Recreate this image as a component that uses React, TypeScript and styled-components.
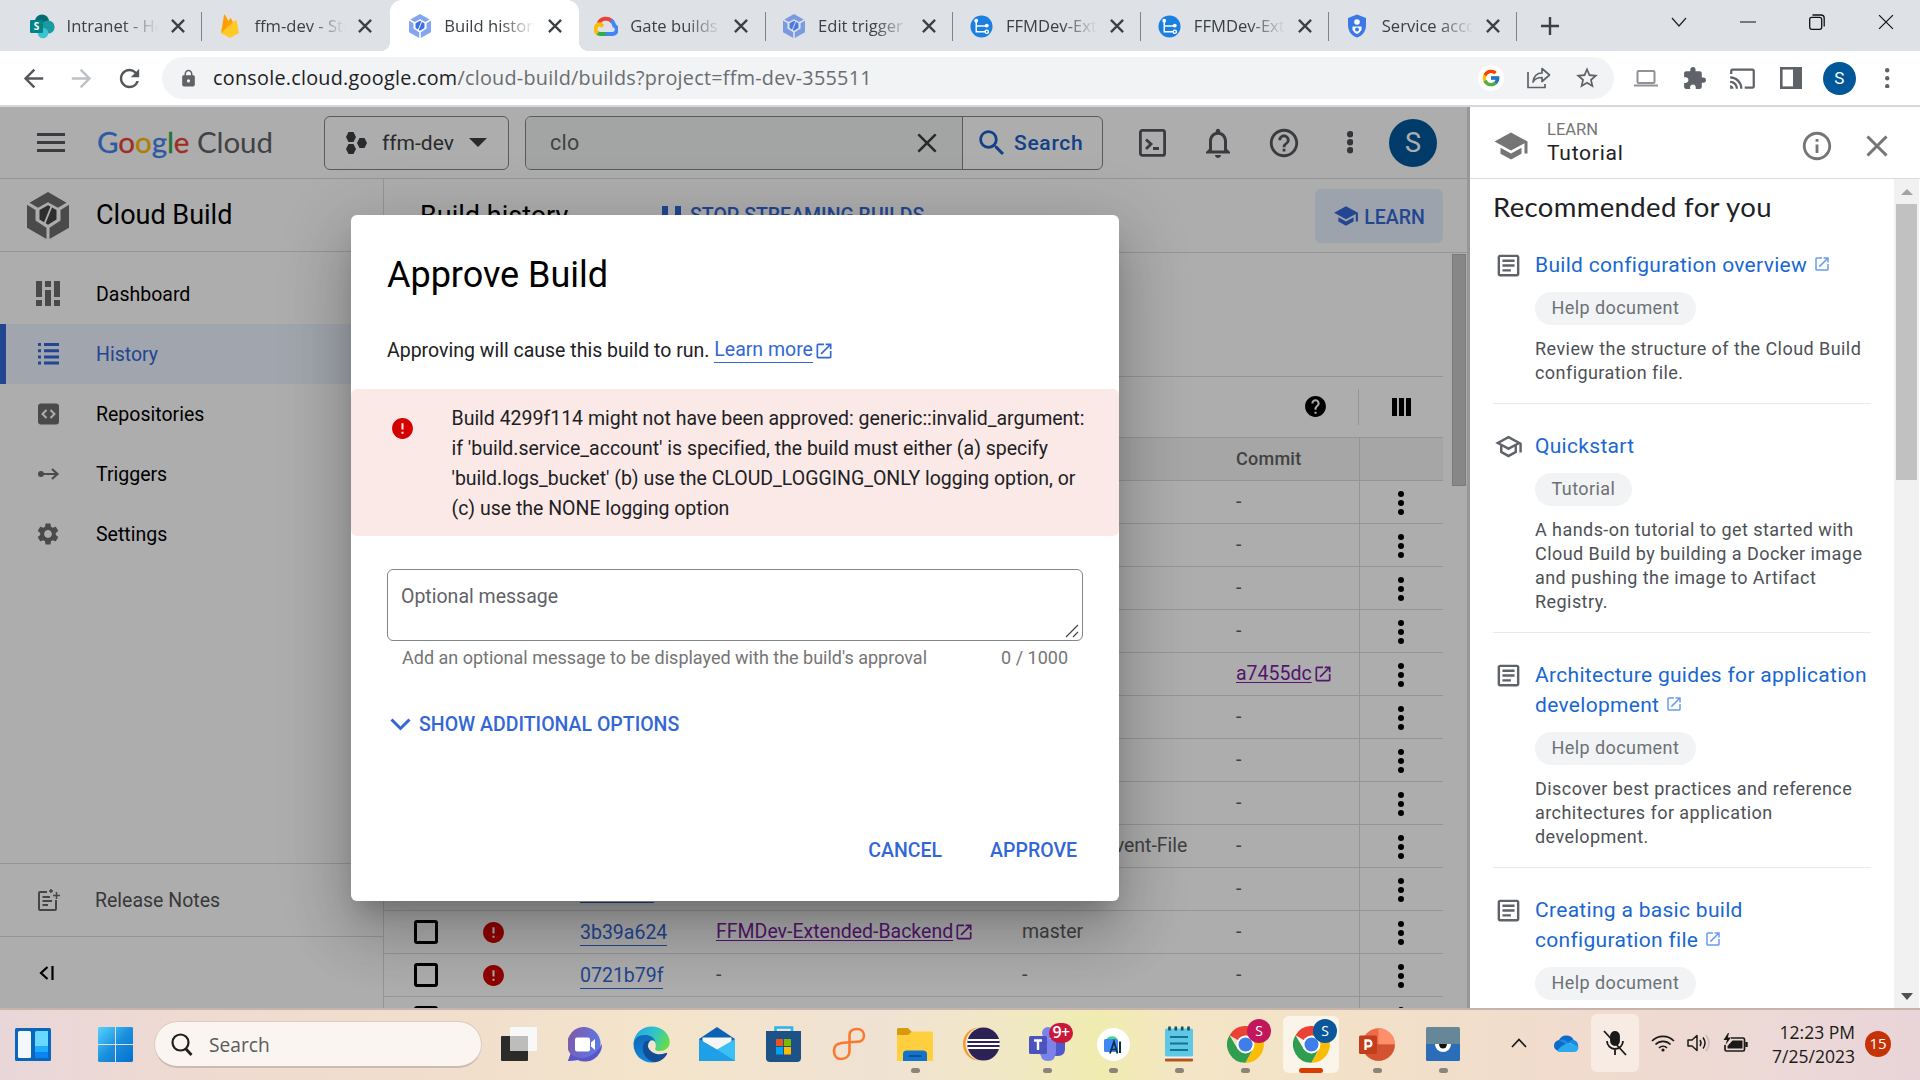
import React from "react";
import styled, { createGlobalStyle, css } from "styled-components";
import {
  MdSchool,
  MdOutlineSchool,
  MdOutlineArticle,
  MdOpenInNew,
  MdSettings,
  MdInfoOutline,
  MdHelp,
  MdHelpOutline,
  MdNotificationsNone,
  MdSearch,
  MdExtension,
  MdCast,
  MdLock,
  MdStarBorder,
  MdArrowBack,
  MdArrowForward,
  MdRefresh,
  MdError,
} from "react-icons/md";
import { FcGoogle } from "react-icons/fc";

const ui = `"Open Sans", "Noto Sans", sans-serif`;
const roboto = `Roboto, "Liberation Sans", sans-serif`;

const Global = createGlobalStyle`
  * { box-sizing: border-box; }
  html, body { margin: 0; padding: 0; background: #fff; }
  body { width: 1920px; height: 1080px; overflow: hidden; font-family: ${roboto}; }
  svg { display: block; flex: none; }
`;

const Screen = styled.div`
  width: 1920px;
  height: 1080px;
  display: flex;
  flex-direction: column;
  overflow: hidden;
`;

/* ---------- browser tabs ---------- */

const TabStrip = styled.div`
  height: 51px;
  flex: none;
  background: #dee1e6;
  display: flex;
  padding-left: 14px;
  font-family: ${ui};
`;

const Tab = styled.div<{ $active?: boolean; $line?: boolean }>`
  position: relative;
  width: 187.9px;
  height: 51px;
  flex: none;
  display: flex;
  align-items: center;
  padding: 1px 0 0 15px;
  ${(p) =>
    p.$line &&
    css`
      &::after {
        content: "";
        position: absolute;
        right: 0;
        top: 12px;
        width: 1px;
        height: 29px;
        background: #808489;
      }
    `}
  ${(p) =>
    p.$active &&
    css`
      background: #fff;
      border-radius: 12px 12px 0 0;
      width: 189.4px;
      margin-right: -1.5px;
      padding-left: 17px;
      &::before {
        content: "";
        position: absolute;
        left: -10px;
        right: -10px;
        bottom: 0;
        height: 10px;
        background: radial-gradient(circle at 0 0, transparent 10px, #fff 10.5px) left / 10px 10px no-repeat,
          radial-gradient(circle at 100% 0, transparent 10px, #fff 10.5px) right / 10px 10px no-repeat;
      }
    `}
`;

const Favicon = styled.div`
  width: 26px;
  height: 26px;
  display: flex;
  align-items: center;
  justify-content: center;
`;

const TabTitle = styled.span`
  margin-left: 11.5px;
  width: 93px;
  overflow: hidden;
  white-space: nowrap;
  font-size: 16.6px;
  line-height: 26px;
  color: #3c4043;
  mask-image: linear-gradient(90deg, #000 60%, transparent 98%);
`;

const TabClose = styled.span`
  margin-left: 11px;
  width: 14px;
  color: #3c4043;
`;

const NewTab = styled.div`
  width: 65px;
  display: flex;
  align-items: center;
  justify-content: center;
`;

const WindowControls = styled.div`
  margin-left: auto;
  width: 276px;
  height: 44px;
  display: grid;
  grid-template-columns: repeat(4, 69px);
  align-items: center;
  justify-items: center;
`;

/* ---------- address bar ---------- */

const Toolbar = styled.div`
  height: 56px;
  flex: none;
  background: #fff;
  border-bottom: 2px solid #d5d7da;
  display: flex;
  align-items: center;
  padding-left: 9px;
  color: #5f6368;
`;

const NavButton = styled.div<{ $dim?: boolean }>`
  width: 48px;
  display: flex;
  justify-content: center;
  color: ${(p) => (p.$dim ? "#bdc1c6" : "#54585d")};
`;

const Omnibox = styled.div`
  margin-left: 9px;
  width: 1452px;
  height: 42px;
  border-radius: 21px;
  background: #f1f3f4;
  display: flex;
  align-items: center;
  padding-left: 17px;
`;

const Url = styled.span`
  margin-left: 15px;
  font-family: ${ui};
  font-size: 19.8px;
  line-height: 28px;
  letter-spacing: 0.26px;
  color: #6a6d71;
  white-space: nowrap;
  b {
    font-weight: 400;
    color: #202124;
  }
`;

const OmniIcons = styled.div`
  margin-left: auto;
  margin-right: 3px;
  display: grid;
  grid-template-columns: repeat(3, 48px);
  justify-items: center;
  align-items: center;
`;

const GBadge = styled.div`
  width: 26px;
  height: 26px;
  border-radius: 50%;
  background: #fff;
  display: flex;
  align-items: center;
  justify-content: center;
`;

const ToolbarIcons = styled.div`
  margin-left: 8px;
  display: grid;
  grid-template-columns: repeat(6, 48.3px);
  justify-items: center;
  align-items: center;
`;

const Avatar = styled.div<{ $size: number; $font: number }>`
  width: ${(p) => p.$size}px;
  height: ${(p) => p.$size}px;
  border-radius: 50%;
  background: #00589b;
  color: #fff;
  display: flex;
  align-items: center;
  justify-content: center;
  font-size: ${(p) => p.$font}px;
`;

/* ---------- console ---------- */

const Body = styled.div`
  height: 901px;
  flex: none;
  display: flex;
`;

const Console = styled.div`
  position: relative;
  width: 1467px;
  flex: none;
  display: flex;
  flex-direction: column;
  overflow: hidden;
`;

const Header = styled.header`
  height: 72px;
  flex: none;
  border-bottom: 1px solid #dadce0;
  display: flex;
  align-items: center;
  padding-left: 37px;
  color: #55585c;
`;

const Logo = styled.div`
  margin-left: 32px;
  margin-bottom: 2px;
  width: 176px;
  font-family: Lato, sans-serif;
  font-size: 29.5px;
  line-height: 40px;
  letter-spacing: -0.05px;
  white-space: nowrap;
  color: #5f6368;
`;

const Letter = styled.span<{ $c: string }>`
  color: ${(p) => p.$c};
  -webkit-text-stroke: 0.3px ${(p) => p.$c};
`;

const ProjectPicker = styled.div`
  margin-left: 51px;
  width: 185px;
  height: 54px;
  border: 1px solid #80868b;
  border-radius: 6px;
  display: flex;
  align-items: center;
  padding-left: 21px;
  font-size: 21px;
  color: #3c4043;
  span {
    margin: 0 16px 0 15px;
    width: 71px;
    white-space: nowrap;
  }
`;

const SearchBox = styled.div`
  margin-left: 16px;
  width: 578px;
  height: 54px;
  border: 1px solid #80868b;
  border-radius: 6px;
  display: flex;
  overflow: hidden;
`;

const SearchInput = styled.div`
  width: 437px;
  background: #f1f3f4;
  border-right: 1px solid #80868b;
  display: flex;
  align-items: center;
  justify-content: space-between;
  padding: 0 25px 0 24px;
  font-size: 21.5px;
  letter-spacing: 0.3px;
  color: #5f6368;
`;

const SearchButton = styled.div`
  display: flex;
  align-items: center;
  padding-left: 12px;
  gap: 5px;
  color: #1a5fc8;
  font-size: 21px;
  font-weight: 500;
  letter-spacing: 0.7px;
`;

const HeaderIcons = styled.div`
  margin-left: 16px;
  display: grid;
  grid-template-columns: 66px 66px 66px 66px 60px;
  justify-items: center;
  align-items: center;
`;

const Columns = styled.div`
  flex: 1;
  display: flex;
`;

const Sidebar = styled.nav`
  width: 384px;
  height: 829px;
  border-right: 1px solid #dadce0;
  display: flex;
  flex-direction: column;
`;

const Product = styled.div`
  height: 73px;
  border-bottom: 1px solid #dadce0;
  display: flex;
  align-items: center;
  padding-left: 27px;
  font-size: 27px;
  gap: 27px;
  color: #000;
`;

const NavList = styled.div`
  padding-top: 12px;
  flex: 1;
`;

const NavItem = styled.div<{ $active?: boolean }>`
  height: 60px;
  display: flex;
  align-items: center;
  padding-left: ${(p) => (p.$active ? 29 : 35)}px;
  border-left: ${(p) => (p.$active ? "6px solid #3367d6" : "0")};
  background: ${(p) => (p.$active ? "#eef3ff" : "none")};
  color: ${(p) => (p.$active ? "#3367d6" : "#000")};
  font-size: 19.5px;
  svg {
    color: ${(p) => (p.$active ? "#3367d6" : "#6e6e6e")};
    margin-right: 35px;
  }
`;

const ReleaseNotes = styled.div`
  height: 74px;
  border-top: 1px solid #dadce0;
  border-bottom: 1px solid #dadce0;
  display: flex;
  align-items: center;
  padding-left: 36px;
  gap: 34px;
  font-size: 19.5px;
  color: #555;
`;

const Collapse = styled.div`
  height: 71px;
  display: flex;
  align-items: center;
  padding-left: 39px;
`;

const Main = styled.main`
  width: 1083px;
  height: 829px;
  overflow: hidden;
`;

const MainHeader = styled.div`
  height: 74px;
  border-bottom: 1px solid #dadce0;
  display: flex;
  align-items: center;
  padding: 0 24px 0 36px;
`;

const MainTitle = styled.h1`
  margin: 0;
  width: 242px;
  font-size: 27px;
  font-weight: 400;
  color: #000;
`;

const StreamButton = styled.div`
  display: flex;
  align-items: center;
  gap: 9px;
  font-size: 19.5px;
  font-weight: 500;
  color: #3367d6;
`;

const LearnButton = styled.div`
  margin-left: auto;
  width: 128px;
  height: 54px;
  border-radius: 6px;
  background: #e8f0fe;
  color: #3367d6;
  display: flex;
  align-items: center;
  justify-content: center;
  gap: 5px;
  font-size: 19.5px;
  font-weight: 500;
  span {
    padding-top: 3px;
  }
`;

const Scroller = styled.div`
  display: flex;
  align-items: flex-start;
  justify-content: space-between;
`;

const Table = styled.div`
  width: 1059px;
`;

const Filters = styled.div`
  height: 124px;
  border-bottom: 1px solid #dadce0;
`;

const TableTools = styled.div`
  height: 60px;
  display: flex;
  align-items: center;
  justify-content: flex-end;
  color: #000;
`;

const HelpSlot = styled.div`
  padding: 0 30px 2px 0;
`;

const ColumnSlot = styled.div`
  width: 85px;
  height: 36px;
  padding: 0 0 1px 33px;
  border-left: 1px solid #dadce0;
  display: flex;
  align-items: center;
`;

const Row = styled.div<{ $head?: boolean }>`
  display: grid;
  grid-template-columns: 97px 99px 136px 306px 214px 123px 84px;
  align-items: center;
  height: 43px;
  border-bottom: 1px solid #dadce0;
  border-top: ${(p) => (p.$head ? "1px solid #dadce0" : "0")};
  ${(p) => p.$head && "height: 44px; background: #f5f5f5;"}
  font-size: ${(p) => (p.$head ? 18 : 19.5)}px;
  line-height: ${(p) => (p.$head ? 22 : 24)}px;
  font-weight: ${(p) => (p.$head ? 500 : 400)};
  letter-spacing: ${(p) => (p.$head ? 0.25 : 0)}px;
  color: #616161;
  white-space: nowrap;
`;

const Cell = styled.span`
  padding-bottom: 1px;
`;

const MenuCell = styled.div`
  height: 43px;
  border-left: 1px solid #dadce0;
  display: flex;
  align-items: center;
  justify-content: center;
  padding-right: 2px;
`;

const Check = styled.span`
  display: block;
  margin: 0 0 2px 30px;
  width: 24px;
  height: 24px;
  border: 3px solid #000;
  border-radius: 3px;
`;

const BuildLink = styled.span`
  justify-self: start;
  color: #3367d6;
  line-height: 25px;
  margin-top: 1px;
  border-bottom: 1px solid #3367d6;
`;

const VisitedLink = styled.span`
  display: inline-flex;
  align-items: center;
  gap: 1px;
  margin-bottom: 2px;
  color: #7b1fa2;
  text-decoration: underline;
  text-underline-offset: 2px;
  text-decoration-thickness: 1px;
`;

const MainThumb = styled.div`
  margin: 1px 1px 0 0;
  width: 14px;
  height: 232px;
  background: #c8c8c8;
  border: 1px solid #b4b4b4;
`;

/* ---------- dialog ---------- */

const Overlay = styled.div`
  position: absolute;
  inset: 0;
  background: rgba(0, 0, 0, 0.32);
  display: flex;
  align-items: center;
  justify-content: center;
  padding-left: 3px;
`;

const Dialog = styled.section`
  width: 768px;
  height: 686px;
  border-radius: 6px;
  background: #fff;
  box-shadow: 0 16px 22px -10px rgba(0, 0, 0, 0.2), 0 36px 57px 4px rgba(0, 0, 0, 0.14),
    0 14px 69px 12px rgba(0, 0, 0, 0.12);
  display: flex;
  flex-direction: column;
  font-size: 19.5px;
  color: #202124;
`;

const DialogTitle = styled.h2`
  margin: 36px 0 0 36px;
  font-size: 36px;
  line-height: 48px;
  font-weight: 400;
  color: #000;
  letter-spacing: -0.02px;
`;

const Intro = styled.p`
  margin: 37px 0 0 36px;
  line-height: 30px;
  display: flex;
  white-space: pre;
`;

const Link = styled.span`
  color: #3367d6;
  display: inline-flex;
  align-items: center;
  gap: 1px;
  u {
    text-decoration: none;
    line-height: 24px;
    border-bottom: 1px solid #3367d6;
  }
`;

const Alert = styled.div`
  margin-top: 23px;
  height: 147px;
  border-radius: 6px;
  background: #fbe9e7;
  display: flex;
  padding: 15px 0 0 39px;
  line-height: 30px;
  svg {
    margin: 12px 36.5px 0 0;
  }
  p {
    margin: 0;
    width: 640px;
    white-space: pre-line;
    letter-spacing: -0.01px;
  }
`;

const Field = styled.div`
  margin: 33px 36px 0;
  height: 72px;
  border: 1px solid #80868b;
  border-radius: 6px;
  padding: 12px 3px 0 13px;
  line-height: 30px;
  color: #5f6368;
  display: flex;
  justify-content: space-between;
`;

const Grip = styled.div`
  align-self: flex-end;
  padding-bottom: 2px;
`;

const Hints = styled.div`
  margin: 5px 51px 0;
  display: flex;
  justify-content: space-between;
  font-size: 18px;
  line-height: 24px;
  color: #757575;
`;

const MoreOptions = styled.div`
  margin: 43px 0 0 39px;
  display: flex;
  align-items: center;
  gap: 8px;
  line-height: 24px;
  font-weight: 500;
  color: #3367d6;
`;

const Actions = styled.div`
  margin: auto 42px 37px;
  display: flex;
  justify-content: flex-end;
  gap: 48px;
  font-weight: 500;
  line-height: 26px;
  color: #3367d6;
`;

/* ---------- learn panel ---------- */

const Panel = styled.aside`
  width: 453px;
  border-left: 3px solid #979797;
  background: #fff;
  display: flex;
  flex-direction: column;
`;

const PanelHeader = styled.div`
  height: 72px;
  flex: none;
  border-bottom: 1px solid #dadce0;
  display: flex;
  align-items: center;
  padding: 6px 32px 0 23px;
  color: #757575;
`;

const PanelHeading = styled.div`
  margin-left: 18px;
  flex: 1;
  display: flex;
  flex-direction: column;
  padding-bottom: 8px;
`;

const Eyebrow = styled.span`
  font-size: 16.5px;
  line-height: 22px;
  color: #757575;
`;

const PanelName = styled.span`
  font-size: 21px;
  line-height: 24px;
  letter-spacing: 0.75px;
  color: #202124;
`;

const HeaderGap = styled.div`
  width: 32px;
`;

const PanelBody = styled.div`
  height: 829px;
  display: flex;
  overflow: hidden;
`;

const PanelContent = styled.div`
  width: 424px;
  padding: 7px 23px 0;
`;

const PanelTitle = styled.h2`
  margin: 0 0 22px;
  font-family: Lato, sans-serif;
  font-weight: 400;
  font-size: 27.5px;
  line-height: 42px;
  letter-spacing: 0.36px;
  color: #202124;
  white-space: nowrap;
`;

const Resource = styled.article`
  display: flex;
  padding-bottom: 18px;
  margin-bottom: 27px;
  border-bottom: 1px solid #e8eaed;
`;

const ResourceIcon = styled.div`
  width: 42px;
  height: 30px;
  padding-left: 0.5px;
  display: flex;
  align-items: center;
  color: #5f6368;
`;

const ResourceText = styled.div`
  flex: 1;
  white-space: pre;
`;

const ResourceTitle = styled.div`
  font-size: 21px;
  line-height: 30px;
  letter-spacing: 0.3px;
  color: #1967d2;
  svg {
    display: inline-block;
    vertical-align: -1px;
    margin-left: 5.5px;
    color: #6a9cf0;
  }
`;

const Chip = styled.span`
  display: block;
  width: fit-content;
  margin: 12px 0;
  padding: 0 16.5px;
  height: 33px;
  line-height: 32px;
  border-radius: 17px;
  background: #f1f3f4;
  font-size: 18px;
  letter-spacing: 0.42px;
  color: #6d7176;
`;

const Description = styled.div`
  font-size: 18px;
  line-height: 24px;
  letter-spacing: 0.44px;
  color: #4d5156;
`;

const Track = styled.div`
  width: 25px;
  background: #f1f1f1;
  display: flex;
  flex-direction: column;
  align-items: center;
  justify-content: space-between;
  padding: 10px 0 8px;
`;

const Thumb = styled.div`
  width: 21px;
  height: 276px;
  background: #c1c1c1;
  margin: 9px 0 auto;
`;

/* ---------- taskbar ---------- */

const Taskbar = styled.footer`
  height: 72px;
  flex: none;
  border-top: 2px solid #c6b4ac;
  background: linear-gradient(
    90deg,
    #e9d6d9 0,
    #efdbd0 220px,
    #f1dfcc 480px,
    #f3e4ca 660px,
    #f0e2d3 880px,
    #f1e8c4 1010px,
    #f0ecb0 1100px,
    #f4e5c6 1190px,
    #f2e1c8 1350px,
    #f1dccd 1550px,
    #ecd8d6 1780px,
    #e9d5d9 1920px
  );
  display: flex;
  align-items: center;
  font-family: ${ui};
`;

const LeftSlot = styled.div<{ $w: number; $pad?: number }>`
  width: ${(p) => p.$w}px;
  height: 70px;
  display: flex;
  align-items: center;
  justify-content: center;
  padding: 0 0 1px ${(p) => p.$pad ?? 0}px;
`;

const TaskSearch = styled.div`
  width: 328px;
  height: 47px;
  margin-bottom: 1px;
  border-radius: 24px;
  border: 1px solid #dccbc1;
  border-bottom: 2px solid #cdbbb2;
  background: #faf5f1;
  display: flex;
  align-items: center;
  padding-left: 16px;
  gap: 16px;
  font-size: 19.2px;
  color: #5c5a59;
`;

const Apps = styled.div`
  margin-left: 4px;
  display: grid;
  grid-template-columns: repeat(15, 66.03px);
`;

const AppSlot = styled.div<{ $active?: boolean; $running?: boolean }>`
  position: relative;
  height: 70px;
  display: flex;
  align-items: center;
  justify-content: center;
  padding-bottom: 2px;
  &::before {
    content: "";
    position: absolute;
    z-index: 0;
    inset: 6px 5px 7px;
    border-radius: 6px;
    background: ${(p) => (p.$active ? "#fbf4e9" : "none")};
  }
  &::after {
    content: "";
    position: absolute;
    bottom: 7px;
    width: ${(p) => (p.$active ? 24 : 9)}px;
    height: 5px;
    border-radius: 3px;
    background: ${(p) => (p.$active ? "#da3b01" : p.$running ? "#8b8479" : "none")};
  }
  > svg {
    position: relative;
  }
`;

const Badge = styled.span<{ $c: string; $bold?: boolean }>`
  position: absolute;
  top: ${(p) => (p.$bold ? 13 : 9)}px;
  left: 35px;
  width: 24px;
  height: ${(p) => (p.$bold ? 20 : 24)}px;
  border-radius: 12px;
  background: ${(p) => p.$c};
  color: #fff;
  font-size: ${(p) => (p.$bold ? 16 : 14)}px;
  font-weight: ${(p) => (p.$bold ? 600 : 400)};
  letter-spacing: ${(p) => (p.$bold ? -0.5 : 0)}px;
  line-height: ${(p) => (p.$bold ? 19 : 23)}px;
  text-align: center;
`;

const Tray = styled.div`
  margin-left: auto;
  display: flex;
  align-items: center;
  height: 70px;
`;

const TraySlot = styled.div<{ $w: number; $lit?: boolean }>`
  width: ${(p) => p.$w}px;
  height: 58px;
  margin-bottom: 4px;
  border-radius: 6px;
  background: ${(p) => (p.$lit ? "#f7ebe3" : "none")};
  display: flex;
  align-items: center;
  justify-content: center;
`;

const Clock = styled.div`
  width: 96px;
  text-align: right;
  font-size: 17.5px;
  line-height: 24px;
  color: #1b1a19;
  margin-bottom: 2px;
  white-space: nowrap;
`;

const Count = styled.div`
  margin: 0 29px 2px 10px;
  width: 26px;
  height: 26px;
  border-radius: 50%;
  background: #c53206;
  color: #fff;
  font-size: 15px;
  line-height: 25px;
  text-align: center;
`;

/* ---------- drawings ---------- */

const BuildIcon = ({ w, h, c, c2, gap }: { w: number; h: number; c: string; c2: string; gap: string }) => (
  <svg width={w} height={h} viewBox="0 0 42 46" preserveAspectRatio="none">
    <path d="M21 0 L39.5 10.5 L31 15.5 L21 10 L11 15.5 L2.5 10.5 Z" fill={c} />
    <path d="M0 12.5 L8.5 17.5 V28 L19.5 35 V46 L0 35 Z" fill={c} />
    <path d="M42 12.5 L33.5 17.5 V28 L22.5 35 V46 L42 35 Z" fill={c} />
    <path d="M21 13 L29.5 17.5 V27 L21 32 L12.5 27 V17.5 Z" fill={c2} />
    <path d="M24.5 14 L17.5 31" stroke={gap} strokeWidth="1.8" />
  </svg>
);

const SharePoint = () => (
  <svg width="25" height="25" viewBox="0 0 25 25">
    <circle cx="12" cy="7.5" r="7" fill="#036c70" />
    <circle cx="18" cy="13" r="6.6" fill="#1a9ba1" />
    <circle cx="13" cy="19" r="5.3" fill="#37c6d0" />
    <rect x="0" y="6" width="13" height="13" rx="1.2" fill="#038387" />
    <text x="6.5" y="16" fontSize="10" fontWeight="700" fill="#fff" textAnchor="middle" fontFamily="Open Sans">S</text>
  </svg>
);

const Firebase = () => (
  <svg width="20" height="25" viewBox="0 0 20 25">
    <path d="M1 19 L4 1 Q4.5 0 5 1 L8.5 7 L10 4.5 Q10.5 3.6 11 4.5 L19 19 Z" fill="#ffa000" />
    <path d="M1 19 L15.5 6 Q16.3 5.6 16.5 6.5 L19 19 L11 23.6 Q10 24 9 23.6 Z" fill="#ffca28" />
  </svg>
);

const CloudLogo = () => (
  <svg width="24" height="20" viewBox="1 0.5 24 20.500" fill="none" strokeWidth="4">
    <path d="M5.5 8 A8 7.5 0 0 1 19.5 6.5" stroke="#ea4335" />
    <path d="M18 5 A8 8 0 0 1 21.5 10.5 A4.5 4.5 0 0 1 20 19 H13" stroke="#4285f4" />
    <path d="M13 19 H7 L3.8 18" stroke="#34a853" />
    <path d="M4.5 18.2 A5 5 0 0 1 7 9 L10 11" stroke="#fbbc04" />
  </svg>
);

const Sourcetree = () => (
  <svg width="23" height="23" viewBox="0 0 24 24">
    <circle cx="12" cy="12" r="11.5" fill="#1a7fe0" />
    <g stroke="#fff" strokeWidth="1.5" fill="none">
      <path d="M6.5 6 V17.5 H16 M6.5 11.5 H17" />
      <circle cx="17.5" cy="17.5" r="1.7" />
    </g>
    <circle cx="6.5" cy="6" r="2" fill="#fff" />
    <circle cx="17.5" cy="11" r="2" fill="#fff" />
  </svg>
);

const ShieldUser = () => (
  <svg width="20" height="24" viewBox="0 0 20 24">
    <path d="M10 0.5 L19 4 V11 C19 17 15.5 22 10 23.5 C4.5 22 1 17 1 11 V4 Z" fill="#3b78e7" />
    <circle cx="10" cy="8" r="2.8" fill="#fff" />
    <path d="M5.5 12.5 H14.5 V16 Q12.5 19 10 20 Q7.5 19 5.5 16 Z" fill="#fff" />
    <circle cx="10" cy="15.5" r="2" fill="#3b78e7" />
  </svg>
);

const Dots = ({ r, gap, c }: { r: number; gap: number; c: string }) => (
  <svg width={2 * r} height={2 * (gap + r)} fill={c}>
    <circle cx={r} cy={r} r={r} />
    <circle cx={r} cy={r + gap} r={r} />
    <circle cx={r} cy={r + 2 * gap} r={r} />
  </svg>
);

const CloseX = ({ s, w, c }: { s: number; w: number; c: string }) => (
  <svg width={s} height={s} viewBox="0 0 12 12" stroke={c} strokeWidth={(w * 12) / s}>
    <path d="M0.8 0.8 L11.2 11.2 M11.2 0.8 L0.8 11.2" />
  </svg>
);

const Chrome = () => (
  <svg width="37" height="37" viewBox="0 0 37 37">
    <path d="M18.5 18.5 L2.5 9.3 A18.3 18.3 0 0 1 34.5 9.5 Z" fill="#ea4335" />
    <path d="M2.5 9.3 L10.7 23 L18.5 27.5 L26 23 L18.5 36.8 A18.3 18.3 0 0 1 2.5 9.3" fill="#2f9e4f" />
    <path d="M18.5 9.5 H34.5 A18.3 18.3 0 0 1 18.5 36.8 L26.3 23 Z" fill="#fbbc04" />
    <circle cx="18.5" cy="18.5" r="9" fill="#fff" />
    <circle cx="18.5" cy="18.5" r="7" fill="#3d7ee8" />
  </svg>
);

const Widgets = () => (
  <svg width="36" height="33" viewBox="0 0 36 33">
    <rect width="36" height="33" rx="1.5" fill="#0a66bd" />
    <rect x="3" y="3" width="13" height="27" rx="1.5" fill="#f5f8fb" />
    <path d="M20 4.5 Q20 3 21.500 3 H33 V18 H20 Z" fill="#69d8ff" />
    <rect x="20" y="18" width="13" height="6" fill="#1eacff" />
    <path d="M20 24 H33 V30 H21.500 Q20 30 20 28.500 Z" fill="#0a84f0" />
  </svg>
);

const Windows = () => (
  <svg width="35" height="35" viewBox="0 0 35 35">
    <defs>
      <linearGradient id="win" x1="0" y1="0" x2="1" y2="1">
        <stop offset="0" stopColor="#55d3ff" />
        <stop offset="0.5" stopColor="#1a90dd" />
        <stop offset="1" stopColor="#0370ce" />
      </linearGradient>
    </defs>
    <path d="M1 0 H17 V17 H0 V1 Z M18 0 H34 L35 1 V17 H18 Z M0 18 H17 V35 H1 L0 34 Z M18 18 H35 V34 L34 35 H18 Z" fill="url(#win)" />
  </svg>
);

const TaskView = () => (
  <svg width="36" height="34" viewBox="0 0 36 34">
    <rect x="0" y="9" width="27" height="25" rx="1" fill="#2b2b2a" />
    <rect x="9" y="0" width="27" height="24" rx="1" fill="#f8f8f8" />
    <rect x="9" y="9" width="18" height="15" fill="#bdbdbc" />
  </svg>
);

const Chat = () => (
  <svg width="34" height="35" viewBox="0 0 34 35">
    <defs>
      <linearGradient id="chat" x1="0" y1="0.200" x2="1" y2="0.500">
        <stop offset="0" stopColor="#8059a8" />
        <stop offset="1" stopColor="#5d78e6" />
      </linearGradient>
    </defs>
    <path d="M17 0 A17 17 0 1 1 10 33 L0 34 L2.500 27 A17 17 0 0 1 17 0 Z" fill="url(#chat)" />
    <path d="M2.500 27 Q12 34 22 29 Q30 25 34 17 A17 17 0 0 1 10 33 L0 34 Z" fill="#5a55c8" />
    <rect x="7" y="10.500" width="15" height="14" rx="2" fill="#fff" />
    <path d="M23 15.500 L27 12 V23 L23 19.500 Z" fill="#fff" />
  </svg>
);

const Edge = () => (
  <svg width="37" height="37" viewBox="0 0 37 37">
    <defs>
      <linearGradient id="edgeTop" x1="0" y1="0.2" x2="1" y2="0.6">
        <stop offset="0" stopColor="#23a3e6" />
        <stop offset="0.55" stopColor="#32c6c4" />
        <stop offset="1" stopColor="#66dd45" />
      </linearGradient>
      <linearGradient id="edgeLeft" x1="0" y1="0" x2="0.4" y2="1">
        <stop offset="0" stopColor="#1264b3" />
        <stop offset="1" stopColor="#0f8be0" />
      </linearGradient>
    </defs>
    <path d="M0.5 18 C1 7 9 0.500 18.500 0.500 C29 0.500 37 8 36.700 16.500 C36.500 22 32 25 26.500 25 C22.500 25 21.500 23.500 22.600 21.500 C23.500 18 22 14 18 14 C14 9 3 10 0.500 18 Z" fill="url(#edgeTop)" />
    <path d="M0.5 18 C1.500 12 6 9 12 9 C17 9 21.500 11.500 22.500 16 C20 13 15.500 14 15 20 C15 27 22 31 34.200 27.500 C31 33 26 36.500 19 36.500 C9 36.500 0.500 29 0.500 18 Z" fill="url(#edgeLeft)" />
    <path d="M12.500 15 C7 21 10 34 22 36.300 C28 35.500 32 32 34.200 27.500 C34 26.500 33 26.800 32 27.300 C25 30 17 27 14.800 20.500 C14.500 18 15.500 15.500 17 14.300 Z" fill="#134d96" />
  </svg>
);

const Mail = () => (
  <svg width="36" height="34" viewBox="0 0 36 34">
    <path d="M0 12 L18 0 L36 12 V20 H0 Z" fill="#0b61b4" />
    <path d="M3.500 10.500 H32.500 V20 L18 24 L3.500 20 Z" fill="#f6f6f6" />
    <path d="M36 12 L18 22.500 L0 34 H36 Z" fill="#3bc0f5" />
    <path d="M0 12 L18 22.500 L36 34 H0 Z" fill="#1f9fe6" />
  </svg>
);

const Store = () => (
  <svg width="35" height="36" viewBox="0 0 35 36">
    <path d="M9.500 7 V1.500 H26 V7" fill="none" stroke="#29b3f2" strokeWidth="2.600" />
    <path d="M0 5 H35 V32 Q35 36 31 36 H4 Q0 36 0 32 Z" fill="#1d5286" />
    <rect x="10" y="13" width="7" height="7" fill="#f25022" />
    <rect x="18" y="13" width="7" height="7" fill="#7fba00" />
    <rect x="10" y="21" width="7" height="7.500" fill="#00a4ef" />
    <rect x="18" y="21" width="7" height="7.500" fill="#ffb900" />
  </svg>
);

const Loop = () => (
  <svg width="34" height="34" viewBox="0 0 34 34" fill="none" stroke="#f97a2e" strokeWidth="2.6">
    <path d="M17.500 8 C17.500 4 20.500 2 25 2 C29.500 2 32 5 32 8.500 C32 12.500 29 14.800 25 14.800 C20 15 14 15.500 9.500 16 C4.500 16.500 2 19.500 2 24 C2 29 5 32 9 32 C14 32 17.500 29 17.500 24 Z" />
  </svg>
);

const Folder = () => (
  <svg width="36" height="33" viewBox="0 0 36 33">
    <path d="M0 1.500 Q0 0 1.500 0 H11 L15 4 V10 H0 Z" fill="#d99a0b" />
    <path d="M0 7 H11 L15 3.500 H34.500 Q36 3.500 36 5 V31.500 Q36 33 34.500 33 H0 Z" fill="#ffcf3f" />
    <path d="M6 33 V26 Q6 22.500 9.500 22.500 H26 Q30 22.500 30 26 V33 Z" fill="#1273c9" />
    <path d="M11.500 28 H24.500" stroke="#0b4f93" strokeWidth="1.800" />
  </svg>
);

const Eclipse = () => (
  <svg width="37" height="34" viewBox="0 0 37 34">
    <ellipse cx="16" cy="17" rx="16" ry="16.500" fill="#f79a2a" />
    <ellipse cx="19.500" cy="17" rx="17" ry="17" fill="#f5e6d2" />
    <ellipse cx="20.500" cy="17" rx="16.200" ry="16.500" fill="#2c2255" />
    <path d="M4.500 13 H36.500 M4 17 H37 M4.500 21 H36.500" stroke="#fff" strokeWidth="1.800" />
  </svg>
);

const Teams = () => (
  <svg width="37" height="34" viewBox="0 0 37 34">
    <path d="M26 12 H36 V22 Q36 29 29 29 H25 Z" fill="#5059c9" />
    <circle cx="19" cy="6" r="6" fill="#7b83eb" />
    <path d="M11 12 H27 V24 Q27 34 19 34 Q11 34 11 24 Z" fill="#7b83eb" />
    <rect x="0" y="9" width="18" height="18" rx="1.500" fill="#4b53bc" />
    <path d="M5 13.500 H13 M9 13.500 V23" stroke="#fff" strokeWidth="2.400" />
  </svg>
);

const AndroidStudio = () => (
  <svg width="33" height="33" viewBox="0 0 33 33">
    <circle cx="16.500" cy="16.500" r="16.500" fill="#fff" />
    <path d="M9.500 11.500 A6 5.500 0 0 1 20.500 11.500 Z" fill="#3ddc84" />
    <rect x="7" y="11" width="14" height="13" rx="1.500" fill="#4285f4" />
    <path d="M13 25.500 L17 13.500 L20.500 25.500 M14 21.500 H19.500" fill="none" stroke="#073042" strokeWidth="1.700" />
    <path d="M23 25 V13.500" stroke="#073042" strokeWidth="2" />
  </svg>
);

const Notepad = () => (
  <svg width="28" height="36" viewBox="0 0 28 36">
    <rect x="0" y="32" width="28" height="3.500" rx="1" fill="#b4551d" />
    <rect x="0" y="29" width="28" height="3.500" fill="#f3f3f3" />
    <rect x="0" y="2.500" width="28" height="28" rx="1.500" fill="#5cc8e6" />
    <path d="M5 11 H23 M5 17.500 H23 M5 24 H23" stroke="#18718d" strokeWidth="1.800" />
    <path d="M4.500 0.500 V4.500 M10.800 0.500 V4.500 M17.200 0.500 V4.500 M23.500 0.500 V4.500" stroke="#134f63" strokeWidth="2.600" />
  </svg>
);

const PowerPoint = () => (
  <svg width="36" height="33" viewBox="0 0 36 33">
    <circle cx="19.500" cy="16.500" r="16.300" fill="#ed6c47" />
    <path d="M19.500 0.200 A16.300 16.300 0 0 1 35.800 16.500 H19.500 Z" fill="#ff8f6b" />
    <path d="M3.200 16.500 H35.800 A16.300 16.300 0 0 1 3.200 16.500 Z" fill="#d35230" />
    <rect x="0" y="7.500" width="18" height="18.500" rx="1.500" fill="#c43e1c" />
    <path d="M6.500 22 V12.500 H9.500 A2.800 2.800 0 0 1 9.500 18.300 H6.500" fill="none" stroke="#fff" strokeWidth="2.300" />
  </svg>
);

const BirdApp = () => (
  <svg width="34" height="34" viewBox="0 0 34 34">
    <path d="M0 1.500 Q0 0 1.500 0 H32.500 Q34 0 34 1.500 V17 H0 Z" fill="#668797" />
    <path d="M0 17 H34 V32.500 Q34 34 32.500 34 H1.500 Q0 34 0 32.500 Z" fill="#2a6db8" />
    <path d="M9 17 A8 8 0 0 0 25 17 Z" fill="#fff" />
    <path d="M13 17 A4 4.500 0 0 0 21 17 Z" fill="#111" />
  </svg>
);

/* ---------- data ---------- */

const tabs = [
  { title: "Intranet - Home", icon: <SharePoint />, line: true },
  { title: "ffm-dev - Storage", icon: <Firebase /> },
  { title: "Build history", icon: <BuildIcon w={22} h={24} c="#83a5f2" c2="#3f6fe0" gap="#fff" />, active: true },
  { title: "Gate builds on", icon: <CloudLogo />, line: true },
  { title: "Edit trigger –", icon: <BuildIcon w={22} h={24} c="#7b9be0" c2="#4c78df" gap="#dee1e6" />, line: true },
  { title: "FFMDev-Extended", icon: <Sourcetree />, line: true },
  { title: "FFMDev-Extended", icon: <Sourcetree />, line: true },
  { title: "Service accounts", icon: <ShieldUser />, line: true },
];

type Build = { status?: boolean; id?: string; source?: string; gitRef?: string; commit?: string };

const builds: Build[] = [
  { commit: "-" },
  { commit: "-" },
  { commit: "-" },
  { commit: "-" },
  { commit: "a7455dc" },
  { commit: "-" },
  { commit: "-" },
  { commit: "-" },
  { gitRef: "Featured-Event-File", commit: "-" },
  { id: "f17cf05f", commit: "-" },
  { status: true, id: "3b39a624", source: "FFMDev-Extended-Backend", gitRef: "master", commit: "-" },
  { status: true, id: "0721b79f", source: "-", gitRef: "-", commit: "-" },
  { status: true },
];

const resources = [
  {
    title: "Build configuration overview",
    ext: true,
    kind: "Help document",
    text: "Review the structure of the Cloud Build\nconfiguration file.",
  },
  {
    title: "Quickstart",
    kind: "Tutorial",
    text: "A hands-on tutorial to get started with\nCloud Build by building a Docker image\nand pushing the image to Artifact\nRegistry.",
  },
  {
    title: "Architecture guides for application\ndevelopment",
    ext: true,
    kind: "Help document",
    text: "Discover best practices and reference\narchitectures for application\ndevelopment.",
  },
  { title: "Creating a basic build\nconfiguration file", ext: true, kind: "Help document", text: "" },
];

const message = `Build 4299f114 might not have been approved: generic::invalid_argument:
if 'build.service_account' is specified, the build must either (a) specify
'build.logs_bucket' (b) use the CLOUD_LOGGING_ONLY logging option, or
(c) use the NONE logging option`;

/* ---------- sections ---------- */

const Tabs = () => (
  <TabStrip>
    {tabs.map((t, i) => (
      <Tab key={i} $active={t.active} $line={t.line}>
        <Favicon>{t.icon}</Favicon>
        <TabTitle>{t.title}</TabTitle>
        <TabClose>
          <CloseX s={14} w={2.3} c="#3c4043" />
        </TabClose>
      </Tab>
    ))}
    <NewTab>
      <svg width="18" height="18" stroke="#3c4043" strokeWidth="2.4">
        <path d="M9 0 V18 M0 9 H18" />
      </svg>
    </NewTab>
    <WindowControls>
      <svg width="16" height="10" fill="none" stroke="#222" strokeWidth="1.200">
        <path d="M1 1 L8 9 L15 1" />
      </svg>
      <svg width="16" height="2">
        <rect width="16" height="1" y="0.500" fill="#111" />
      </svg>
      <svg width="16" height="16" fill="none" stroke="#111" strokeWidth="1.300">
        <rect x="0.700" y="3.300" width="12" height="12" rx="2" />
        <path d="M3.500 1 H12 Q15.200 1 15.200 4 V12.500" />
      </svg>
      <CloseX s={16} w={1.2} c="#111" />
    </WindowControls>
  </TabStrip>
);

const AddressBar = () => (
  <Toolbar>
    <NavButton><MdArrowBack size={29} /></NavButton>
    <NavButton $dim><MdArrowForward size={29} /></NavButton>
    <NavButton><MdRefresh size={29} /></NavButton>
    <Omnibox>
      <MdLock size={19} />
      <Url><b>console.cloud.google.com</b>/cloud-build/builds?project=ffm-dev-355511</Url>
      <OmniIcons>
        <GBadge><FcGoogle size={20} /></GBadge>
        <svg width="24" height="22" fill="none" stroke="#5f6368" strokeWidth="1.700">
          <path d="M1 5 V20.500 H18 V17" />
          <path d="M6 15 C7 8 11 6 15 6 V1.500 L22.500 8 L15 14.500 V10.500 C11 10.500 8 11.500 6 15 Z" strokeLinejoin="round" />
        </svg>
        <MdStarBorder size={26} />
      </OmniIcons>
    </Omnibox>
    <ToolbarIcons>
      <svg width="24" height="17">
        <rect x="3.500" y="1" width="17" height="12" rx="1" fill="none" stroke="#8f9296" strokeWidth="2" />
        <rect y="14.500" width="24" height="2" fill="#8f9296" />
      </svg>
      <MdExtension size={25} />
      <MdCast size={27} />
      <svg width="22" height="22">
        <rect x="1.300" y="1.300" width="19.400" height="19.400" fill="none" stroke="#5f6368" strokeWidth="2.600" />
        <rect x="13" y="0" width="9" height="22" fill="#5f6368" />
      </svg>
      <Avatar $size={33} $font={17}>S</Avatar>
      <Dots r={2.2} gap={8} c="#5f6368" />
    </ToolbarIcons>
  </Toolbar>
);

const ConsoleHeader = () => (
  <Header>
    <svg width="28" height="19" stroke="#55585c" strokeWidth="3">
      <path d="M0 1.500 H28 M0 9.500 H28 M0 17.500 H28" />
    </svg>
    <Logo>
      <Letter $c="#4285f4">G</Letter>
      <Letter $c="#ea4335">o</Letter>
      <Letter $c="#fbbc04">o</Letter>
      <Letter $c="#4285f4">g</Letter>
      <Letter $c="#34a853">l</Letter>
      <Letter $c="#ea4335">e</Letter> Cloud
    </Logo>
    <ProjectPicker>
      <svg width="21" height="22" fill="#3c4043">
        <path d="M2.500 0 H7.500 L10 5 L7.500 10 H2.500 L0 5 Z M2.500 12 H7.500 L10 17 L7.500 22 H2.500 L0 17 Z M13.500 6 H18.500 L21 11 L18.500 16 H13.500 L11 11 Z" />
      </svg>
      <span>ffm-dev</span>
      <svg width="18" height="9" fill="#3c4043"><path d="M0 0 H18 L9 9 Z" /></svg>
    </ProjectPicker>
    <SearchBox>
      <SearchInput>
        clo
        <CloseX s={20} w={2.6} c="#3c4043" />
      </SearchInput>
      <SearchButton>
        <MdSearch size={34} />
        Search
      </SearchButton>
    </SearchBox>
    <HeaderIcons>
      <svg width="27" height="28" fill="none" stroke="#55585c" strokeWidth="2.800">
        <rect x="1.400" y="1.400" width="24.200" height="25" rx="2" />
        <path d="M7 10.500 L12 15 L7 20 M14 19.500 H20" />
      </svg>
      <MdNotificationsNone size={36} />
      <MdHelpOutline size={34} />
      <Dots r={3.2} gap={8} c="#4d5054" />
      <Avatar $size={48} $font={27}>S</Avatar>
    </HeaderIcons>
  </Header>
);

const SideNav = () => (
  <Sidebar>
    <Product>
      <BuildIcon w={42} h={47} c="#6e6e6e" c2="#444" gap="#fff" />
      Cloud Build
    </Product>
    <NavList>
      <NavItem>
        <svg width="26" height="26" fill="currentColor">
          <path d="M1 0 H7 V16 H1 Z M1 19 H7 V25 H1 Z M10 0 H16 V6 H10 Z M10 9 H16 V25 H10 Z M19 0 H25 V16 H19 Z M19 19 H25 V25 H19 Z" />
        </svg>
        Dashboard
      </NavItem>
      <NavItem $active>
        <svg width="26" height="22" fill="currentColor">
          <path d="M3 0 h3 v3 h-3 Z M3 6.200 h3 v3 h-3 Z M3 12.400 h3 v3 h-3 Z M3 18.600 h3 v3 h-3 Z M9 0 h15 v3 h-15 Z M9 6.200 h15 v3 h-15 Z M9 12.400 h15 v3 h-15 Z M9 18.600 h15 v3 h-15 Z" />
        </svg>
        History
      </NavItem>
      <NavItem>
        <svg width="26" height="22">
          <rect x="3" y="0.500" width="21" height="21" rx="3" fill="currentColor" />
          <path d="M11.500 7 L7.500 11 L11.500 15 M15.500 7 L19.500 11 L15.500 15" fill="none" stroke="#fff" strokeWidth="2" />
        </svg>
        Repositories
      </NavItem>
      <NavItem>
        <svg width="26" height="22" fill="none" stroke="currentColor" strokeWidth="2.200">
          <circle cx="6" cy="11" r="3" fill="currentColor" stroke="none" />
          <path d="M6 11 H22 M17 6 L22.500 11 L17 16" />
        </svg>
        Triggers
      </NavItem>
      <NavItem>
        <MdSettings size={26} />
        Settings
      </NavItem>
    </NavList>
    <ReleaseNotes>
      <svg width="25" height="22" fill="none" stroke="#666" strokeWidth="2">
        <path d="M11 3 H4 Q3 3 3 4 V20 Q3 21 4 21 H19 Q20 21 20 20 V11" />
        <path d="M6.500 8 H14 M6.500 12 H16 M6.500 16 H12" />
        <path d="M15 0 V4 M13 2 H17 M20.500 3 V10 M17 6.500 H24" strokeWidth="1.500" />
      </svg>
      Release Notes
    </ReleaseNotes>
    <Collapse>
      <svg width="15" height="14" fill="none" stroke="#000" strokeWidth="2.200">
        <path d="M8.500 1 L2 7 L8.500 13 M13.500 0 V14" />
      </svg>
    </Collapse>
  </Sidebar>
);

const LinkOrText = ({ value }: { value?: string }) =>
  value && value !== "-" ? (
    <VisitedLink>{value}<MdOpenInNew size={20} /></VisitedLink>
  ) : (
    <Cell>{value}</Cell>
  );

const BuildRow = ({ b }: { b: Build }) => (
  <Row>
    {b.status ? <Check /> : <span />}
    {b.status ? <MdError size={25} color="#d50000" /> : <span />}
    {b.id ? <BuildLink>{b.id}</BuildLink> : <span />}
    <LinkOrText value={b.source} />
    <Cell>{b.gitRef}</Cell>
    <LinkOrText value={b.commit} />
    <MenuCell><Dots r={3} gap={9} c="#000" /></MenuCell>
  </Row>
);

const History = () => (
  <Main>
    <MainHeader>
      <MainTitle>Build history</MainTitle>
      <StreamButton>
        <svg width="19" height="19" fill="#3367d6"><path d="M0 0 H6 V19 H0 Z M13 0 H19 V19 H13 Z" /></svg>
        STOP STREAMING BUILDS
      </StreamButton>
      <LearnButton>
        <MdSchool size={26} />
        <span>LEARN</span>
      </LearnButton>
    </MainHeader>
    <Scroller>
      <Table>
        <Filters />
        <TableTools>
          <HelpSlot><MdHelp size={25} /></HelpSlot>
          <ColumnSlot>
            <svg width="19" height="18"><path d="M0 0 H5 V18 H0 Z M7 0 H12 V18 H7 Z M14 0 H19 V18 H14 Z" /></svg>
          </ColumnSlot>
        </TableTools>
        <Row $head>
          <span />
          <span />
          <span />
          <span />
          <span />
          <Cell>Commit</Cell>
          <MenuCell />
        </Row>
        {builds.map((b, i) => (
          <BuildRow key={i} b={b} />
        ))}
      </Table>
      <MainThumb />
    </Scroller>
  </Main>
);

const ApproveDialog = () => (
  <Overlay>
    <Dialog>
      <DialogTitle>Approve Build</DialogTitle>
      <Intro>
        {"Approving will cause this build to run. "}
        <Link><u>Learn more</u><MdOpenInNew size={20} /></Link>
      </Intro>
      <Alert>
        <MdError size={25} color="#d50000" />
        <p>{message}</p>
      </Alert>
      <Field>
        Optional message
        <Grip>
          <svg width="14" height="14" stroke="#444" strokeWidth="1.200">
            <path d="M1 13 L13 1 M8 13 L13 8" />
          </svg>
        </Grip>
      </Field>
      <Hints>
        <span>Add an optional message to be displayed with the build's approval</span>
        <span>0 / 1000</span>
      </Hints>
      <MoreOptions>
        <svg width="21" height="13" fill="none" stroke="#3367d6" strokeWidth="3">
          <path d="M1.500 1.500 L10.500 10.500 L19.500 1.500" />
        </svg>
        SHOW ADDITIONAL OPTIONS
      </MoreOptions>
      <Actions>
        <span>CANCEL</span>
        <span>APPROVE</span>
      </Actions>
    </Dialog>
  </Overlay>
);

const LearnPanel = () => (
  <Panel>
    <PanelHeader>
      <MdSchool size={36} />
      <PanelHeading>
        <Eyebrow>LEARN</Eyebrow>
        <PanelName>Tutorial</PanelName>
      </PanelHeading>
      <MdInfoOutline size={34} />
      <HeaderGap />
      <CloseX s={22} w={3} c="#757575" />
    </PanelHeader>
    <PanelBody>
      <PanelContent>
        <PanelTitle>Recommended for you</PanelTitle>
        {resources.map((r) => (
          <Resource key={r.title}>
            <ResourceIcon>{r.ext ? <MdOutlineArticle size={29} /> : <MdOutlineSchool size={29} />}</ResourceIcon>
            <ResourceText>
              <ResourceTitle>
                {r.title}
                {r.ext && <MdOpenInNew size={18} />}
              </ResourceTitle>
              <Chip>{r.kind}</Chip>
              <Description>{r.text}</Description>
            </ResourceText>
          </Resource>
        ))}
      </PanelContent>
      <Track>
        <svg width="12" height="6"><path d="M0 6 L6 0 L12 6 Z" fill="#a3a3a3" /></svg>
        <Thumb />
        <svg width="12" height="7"><path d="M0 0 L6 7 L12 0 Z" fill="#505050" /></svg>
      </Track>
    </PanelBody>
  </Panel>
);

const TaskbarView = () => (
  <Taskbar>
    <LeftSlot $w={66}><Widgets /></LeftSlot>
    <LeftSlot $w={88} $pad={11}><Windows /></LeftSlot>
    <TaskSearch>
      <svg width="22" height="23" fill="none" stroke="#1f1f1f" strokeWidth="2.200">
        <circle cx="9.500" cy="9.500" r="8" />
        <path d="M14.500 15.500 L20.500 22" strokeWidth="2.800" />
      </svg>
      Search
    </TaskSearch>
    <Apps>
      <AppSlot><TaskView /></AppSlot>
      <AppSlot><Chat /></AppSlot>
      <AppSlot><Edge /></AppSlot>
      <AppSlot><Mail /></AppSlot>
      <AppSlot><Store /></AppSlot>
      <AppSlot><Loop /></AppSlot>
      <AppSlot $running><Folder /></AppSlot>
      <AppSlot><Eclipse /></AppSlot>
      <AppSlot $running><Teams /><Badge $c="#c9183a" $bold>9+</Badge></AppSlot>
      <AppSlot $running><AndroidStudio /></AppSlot>
      <AppSlot $running><Notepad /></AppSlot>
      <AppSlot $running><Chrome /><Badge $c="#c2185b">S</Badge></AppSlot>
      <AppSlot $active><Chrome /><Badge $c="#0b579b">S</Badge></AppSlot>
      <AppSlot $running><PowerPoint /></AppSlot>
      <AppSlot $running><BirdApp /></AppSlot>
    </Apps>
    <Tray>
      <TraySlot $w={45}>
        <svg width="16" height="10" fill="none" stroke="#1b1a19" strokeWidth="1.800"><path d="M1 9 L8 1.500 L15 9" /></svg>
      </TraySlot>
      <TraySlot $w={50}>
        <svg width="25" height="20" viewBox="0 0 25 20">
          <path d="M0 13 A6.500 6 0 0 1 5 7 A8 7.500 0 0 1 19.500 6.500 L12 13 L4 18 Q0 16 0 13 Z" fill="#0c6bc9" />
          <path d="M5 7.500 Q9 5.500 12.500 8 L24 14.500 Q25 8 19 6.700 Q15 7 12 11 Z" fill="#1a8ce0" />
          <path d="M3 17.500 Q8 12 14 9.500 L24.500 14 Q24.500 19 19.500 19 H6 Q4 19 3 17.500 Z" fill="#2aa8f0" />
        </svg>
      </TraySlot>
      <TraySlot $w={48} $lit>
        <svg width="26" height="26" fill="none" stroke="#1b1a19" strokeWidth="1.800">
          <rect x="9" y="2" width="8" height="13" rx="4" fill="#1b1a19" />
          <path d="M5 11 A8 8 0 0 0 21 11 M13 19 V25 M2 1 L24 25" />
        </svg>
      </TraySlot>
      <TraySlot $w={48}>
        <svg width="24" height="18" fill="none" stroke="#1b1a19" strokeWidth="1.700">
          <path d="M1 7 A15.500 15.500 0 0 1 23 7 M4.500 10.500 A10.500 10.500 0 0 1 19.500 10.500 M8 14 A5.500 5.500 0 0 1 16 14" />
          <circle cx="12" cy="16" r="1.600" fill="#1b1a19" stroke="none" />
        </svg>
      </TraySlot>
      <TraySlot $w={24}>
        <svg width="24" height="18" fill="none" stroke="#1b1a19" strokeWidth="1.500">
          <path d="M1 6 H5 L10 1.500 V16.500 L5 12 H1 Z" strokeLinejoin="round" />
          <path d="M13 6 Q15 9 13 12 M16 3.500 Q20 9 16 14.500" />
          <path d="M19 1 Q25 9 19 17" stroke="#c9bcb4" />
        </svg>
      </TraySlot>
      <TraySlot $w={48}>
        <svg width="25" height="20" fill="none" stroke="#1b1a19" strokeWidth="1.700">
          <path d="M8 5 H20 Q21.500 5 21.500 6.500 V16.500 Q21.500 18 20 18 H3.500 Q2 18 2 16.500 V12" />
          <path d="M9.500 7.500 H19.500 V15.500 H4.500 V13 Z" fill="#1b1a19" stroke="none" />
          <path d="M23.500 9 V14" strokeWidth="2.400" />
          <path d="M5 0 L0.500 7 H4 L2.500 12 L8 4.500 H4.800 L6 0 Z" fill="#1b1a19" stroke="none" />
        </svg>
      </TraySlot>
      <Clock>
        12:23 PM
        <br />
        7/25/2023
      </Clock>
      <Count>15</Count>
    </Tray>
  </Taskbar>
);

export default function App() {
  return (
    <>
      <Global />
      <Screen>
        <Tabs />
        <AddressBar />
        <Body>
          <Console>
            <ConsoleHeader />
            <Columns>
              <SideNav />
              <History />
            </Columns>
            <ApproveDialog />
          </Console>
          <LearnPanel />
        </Body>
        <TaskbarView />
      </Screen>
    </>
  );
}
